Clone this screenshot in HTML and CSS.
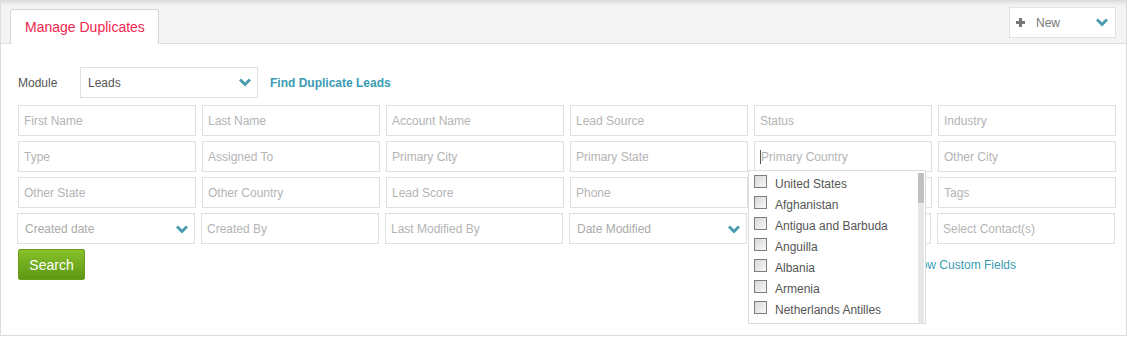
FILE: index.html
```html
<!DOCTYPE html>
<html lang="en">
<head>
  <meta charset="UTF-8" />
  <title>Manage Duplicates</title>
  <link rel="stylesheet" href="styles.css">
</head>
<body>
  <div class="panel">
    <div class="panel-head">
      <div class="tab">Manage Duplicates</div>
      <div class="new-btn">
        <svg class="plus" width="9" height="9" viewBox="0 0 9 9"><path d="M3 0h3v3h3v3H6v3H3V6H0V3h3z" fill="#777"/></svg>
        <span>New</span>
        <svg class="chev" width="12" height="9" viewBox="0 0 12 9"><path d="M1 1.5l5 5 5-5" fill="none" stroke="#4a9db0" stroke-width="3"/></svg>
      </div>
    </div>

    <div class="panel-body">
      <div class="module-row">
        <label>Module</label>
        <div class="select module-select">
          <span>Leads</span>
          <svg class="chev" width="12" height="9" viewBox="0 0 12 9"><path d="M1 1.5l5 5 5-5" fill="none" stroke="#4a9db0" stroke-width="3"/></svg>
        </div>
        <a class="link find">Find Duplicate Leads</a>
      </div>

      <div class="fields">
        <div class="field">First Name</div>
        <div class="field">Last Name</div>
        <div class="field">Account Name</div>
        <div class="field">Lead Source</div>
        <div class="field">Status</div>
        <div class="field">Industry</div>

        <div class="field">Type</div>
        <div class="field">Assigned To</div>
        <div class="field">Primary City</div>
        <div class="field">Primary State</div>
        <div class="field focused">
          <span class="caret"></span>Primary Country
          <div class="dropdown">
            <ul class="options">
              <li><span class="check"></span>United States</li>
              <li><span class="check"></span>Afghanistan</li>
              <li><span class="check"></span>Antigua and Barbuda</li>
              <li><span class="check"></span>Anguilla</li>
              <li><span class="check"></span>Albania</li>
              <li><span class="check"></span>Armenia</li>
              <li><span class="check"></span>Netherlands Antilles</li>
            </ul>
            <div class="scrollbar"><div class="thumb"></div></div>
          </div>
        </div>
        <div class="field">Other City</div>

        <div class="field">Other State</div>
        <div class="field">Other Country</div>
        <div class="field">Lead Score</div>
        <div class="field">Phone</div>
        <div class="field"></div>
        <div class="field">Tags</div>

        <div class="field select-field shift">Created date
          <svg class="chev" width="12" height="9" viewBox="0 0 12 9"><path d="M1 1.5l5 5 5-5" fill="none" stroke="#4a9db0" stroke-width="3"/></svg>
        </div>
        <div class="field shift">Created By</div>
        <div class="field shift">Last Modified By</div>
        <div class="field select-field shift">Date Modified
          <svg class="chev" width="12" height="9" viewBox="0 0 12 9"><path d="M1 1.5l5 5 5-5" fill="none" stroke="#4a9db0" stroke-width="3"/></svg>
        </div>
        <div class="field shift"></div>
        <div class="field shift">Select Contact(s)</div>
      </div>

      <div class="actions">
        <button class="search">Search</button>
        <a class="link custom">Show Custom Fields</a>
      </div>
    </div>
  </div>
</body>
</html>
```

FILE: styles.css
```css
body {
  margin: 0;
  font-family: "Liberation Sans", Arial, sans-serif;
  font-size: 12px;
  color: #555;
  background: #fff;
}

.panel {
  width: 1125px;
  height: 335px;
  border: 1px solid #dcdcdc;
  border-top: none;
  background: #fff;
}

.panel-head {
  height: 43px;
  background: linear-gradient(#d9d9d9 0, #efefef 4px, #f4f4f4 7px);
  border-bottom: 1px solid #dedede;
  display: flex;
  align-items: flex-start;
  justify-content: space-between;
  padding: 0 10px 0 9px;
}

.tab {
  margin-top: 8px;
  width: 149px;
  height: 35px;
  box-sizing: border-box;
  background: #fff;
  border: 1px solid #d6d6d6;
  border-bottom: none;
  border-radius: 3px 3px 0 0;
  color: #f0264f;
  font-size: 14px;
  padding: 9px 0 0 14px;
  position: relative;
  top: 1px;
}

.new-btn {
  margin-top: 7px;
  width: 107px;
  height: 31px;
  box-sizing: border-box;
  background: #fff;
  border: 1px solid #e2e2e2;
  display: flex;
  align-items: center;
  padding: 0 7px 0 6px;
  color: #777;
  font-size: 12px;
}

.new-btn .plus {
  margin-right: 11px;
}

.new-btn span {
  flex: 1;
}

.panel-body {
  padding: 23px 10px 0 17px;
}

.module-row {
  display: flex;
  align-items: center;
  height: 31px;
}

.module-row label {
  width: 62px;
}

.select {
  display: flex;
  align-items: center;
  justify-content: space-between;
  box-sizing: border-box;
  border: 1px solid #e0e0e0;
  height: 31px;
  padding: 0 6px 0 7px;
}

.module-select {
  width: 178px;
  color: #555;
}

.link {
  color: #3a9bb2;
  cursor: pointer;
}

.find {
  font-weight: bold;
  margin-left: 12px;
}

.fields {
  margin-top: 7px;
  display: grid;
  grid-template-columns: repeat(6, 178px);
  grid-auto-rows: 31px;
  column-gap: 6px;
  row-gap: 5px;
}

.field {
  box-sizing: border-box;
  border: 1px solid #e0e0e0;
  color: #b4b4b4;
  padding: 8px 0 0 5px;
  white-space: nowrap;
  position: relative;
}

.field.shift {
  left: -1px;
}

.select-field {
  display: flex;
  justify-content: space-between;
  align-items: flex-start;
  padding: 8px 6px 0 7px;
  color: #aaa;
}

.select-field .chev {
  margin-top: 3px;
}

.caret {
  display: inline-block;
  width: 1px;
  height: 14px;
  background: #555;
  vertical-align: -3px;
}

.dropdown {
  position: absolute;
  left: -7px;
  top: 28px;
  width: 178px;
  height: 154px;
  box-sizing: border-box;
  background: #fff;
  border: 1px solid #dcdcdc;
  z-index: 5;
  display: flex;
}

.options {
  list-style: none;
  margin: 0;
  padding: 2px 0 0 5px;
  flex: 1;
}

.options li {
  height: 21px;
  display: flex;
  align-items: center;
  color: #555;
  font-size: 12px;
}

.check {
  width: 11px;
  height: 11px;
  border: 1px solid #7d7d7d;
  background: linear-gradient(135deg, #d8d8d8, #f8f8f8);
  margin-right: 8px;
  position: relative;
  top: -2px;
}

.scrollbar {
  width: 6px;
  background: #e6e6e6;
  margin: 2px 1px 0 0;
}

.thumb {
  height: 30px;
  background: #c1c1c1;
}

.actions {
  margin-top: 5px;
  display: flex;
  align-items: center;
}

.search {
  width: 67px;
  height: 31px;
  border: 1px solid #6a9c1c;
  border-radius: 2px;
  background: linear-gradient(#86c12a, #5e9713);
  color: #fff;
  font-family: "Liberation Sans", Arial, sans-serif;
  font-size: 14px;
  padding: 0;
  cursor: pointer;
}

.custom {
  margin-left: 821px;
  margin-top: 1px;
}
```
